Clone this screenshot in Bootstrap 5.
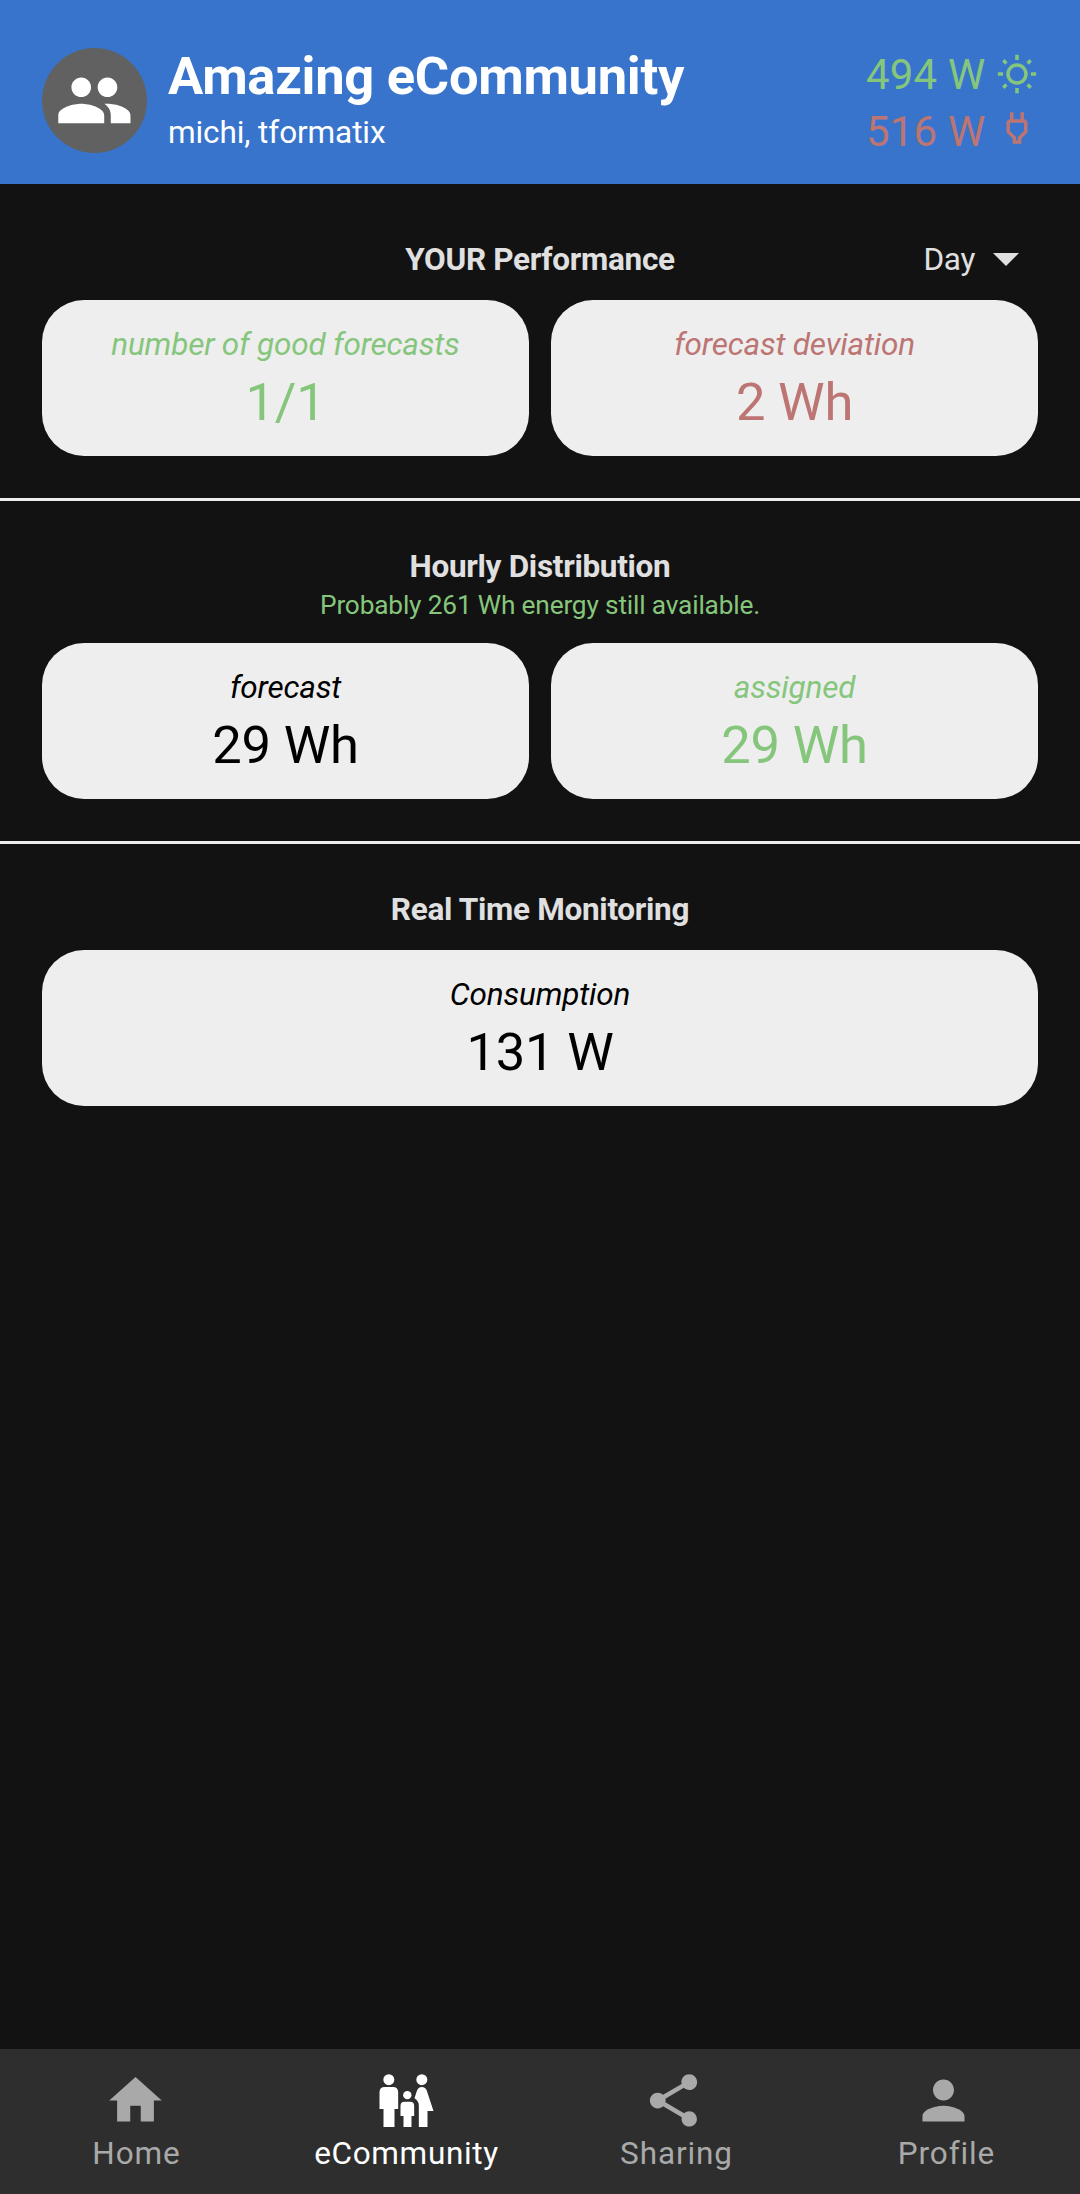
<!DOCTYPE html>
<html lang="en">
<head>
<meta charset="utf-8">
<meta name="viewport" content="width=device-width, initial-scale=1">
<title>Amazing eCommunity</title>
<link href="https://cdn.jsdelivr.net/npm/bootstrap@5.3.0/dist/css/bootstrap.min.css" rel="stylesheet">
<style>
  :root { --good: #86c67c; --bad: #bc7573; --page: #121212; --tile: #eeeeee; }
  body { background: var(--page); color: #e0e0e0; font-family: Roboto, sans-serif; font-size: 31.5px; line-height: 37px; min-height: 2194px; }
  svg { display: block; flex: none; }
  .good { color: var(--good); }
  .bad { color: var(--bad); }
  .app-header { background: #3874cc; height: 184px; padding: 45px 42px 0; }
  .avatar { width: 105px; height: 105px; background: #616161; margin: 3px 21px 0 0; }
  .app-title { font-size: 52.5px; line-height: 62px; letter-spacing: -.29px; font-weight: 700; margin: 0; }
  .members { letter-spacing: -.1px; margin-top: 7px; }
  .power { font-size: 42px; line-height: 49px; letter-spacing: .2px; gap: 10.5px; }
  .power-list { padding-top: 5px; gap: 8px; }
  .power .sun { margin-top: 3px; }
  .panel { padding: 0 42px 42px; }
  .panel + .panel { border-top: 3px solid var(--tile); }
  .panel-title { font-size: 31.5px; line-height: 37px; font-weight: 700; letter-spacing: -.3px; margin-bottom: 0; }
  .first-head { padding-top: 57px; padding-bottom: 22px; }
  .other-head { padding-top: 47px; padding-bottom: 22px; }
  .hint { font-size: 26.25px; line-height: 31px; letter-spacing: -.17px; margin-top: 5px; }
  .period { letter-spacing: -.3px; gap: 18px; padding-right: 19px; }
  .tiles { gap: 22px; }
  .tile { background: var(--tile); border-radius: 42px; height: 156px; padding-top: 26px; flex: 1 1 0; }
  .tile-label { font-style: italic; letter-spacing: -.2px; }
  .tile-value { font-size: 52.5px; line-height: 62px; margin-top: 8px; letter-spacing: -.2px; }
  .tab-bar { background: #2e2e2e; height: 145px; color: #a9a9a9; }
  .tab-bar a { color: inherit; text-decoration: none; letter-spacing: .9px; padding-top: 20px; flex: 1 1 0; }
  .tab-bar a.active { color: #fff; letter-spacing: .65px; }
  .tab-bar span { margin-top: 3px; padding-left: 3px; }
</style>
<script src="https://cdn.jsdelivr.net/npm/bootstrap@5.3.0/dist/js/bootstrap.bundle.min.js"></script>
</head>
<body class="d-flex flex-column">

<header class="app-header d-flex text-white">
  <div class="avatar rounded-circle d-flex align-items-center justify-content-center">
    <svg width="78.75" height="78.75" viewBox="0 0 24 24" fill="#fff"><path d="M16 11c1.66 0 2.99-1.34 2.99-3S17.66 5 16 5s-3 1.34-3 3 1.34 3 3 3zm-8 0c1.66 0 2.99-1.34 2.99-3S9.66 5 8 5 5 6.34 5 8s1.34 3 3 3zm0 2c-2.33 0-7 1.17-7 3.5V19h14v-2.5c0-2.33-4.67-3.5-7-3.5zm8 0c-.29 0-.62.02-.97.05 1.16.84 1.97 1.97 1.97 3.45V19h6v-2.5c0-2.33-4.67-3.5-7-3.5z"/></svg>
  </div>
  <div class="flex-grow-1">
    <h1 class="app-title">Amazing eCommunity</h1>
    <div class="members">michi, tformatix</div>
  </div>
  <div class="power-list d-flex flex-column align-items-end">
    <div class="power good d-flex">
      <span>494 W</span>
      <svg class="sun" width="42" height="42" viewBox="0 0 42 42" fill="none" stroke="currentColor" stroke-width="3.5"><circle cx="21" cy="21" r="9"/><path d="M21 1.8v5.3M21 34.9v5.3M1.8 21h5.3M34.9 21h5.3M7.300 7.300l3.100 3.100M31.600 31.600l3.100 3.100M7.300 34.700l3.100-3.100M31.600 10.400l3.100-3.100"/></svg>
    </div>
    <div class="power bad d-flex">
      <span>516 W</span>
      <svg width="42" height="42" viewBox="0 0 24 24" fill="currentColor"><path d="M16 7V3h-2v4h-4V3H8v4C7 7 6 8 6 9v5.5L9.500 18v3h5v-3l3.500-3.500V9c0-1-1-2-2-2m0 6.670l-3.500 3.500V19h-1v-1.830L8 13.650V9h8z"/></svg>
    </div>
  </div>
</header>

<main class="flex-grow-1">
  <section class="panel">
    <div class="first-head row gx-0">
      <h2 class="panel-title col-4 offset-4 text-center">YOUR Performance</h2>
      <div class="period col-4 d-flex align-items-center justify-content-end">
        <span>Day</span>
        <svg width="26" height="13" viewBox="0 0 10 5" fill="currentColor"><path d="M0 0l5 5 5-5z"/></svg>
      </div>
    </div>
    <div class="tiles d-flex text-center">
      <div class="tile good"><div class="tile-label">number of good forecasts</div><div class="tile-value">1/1</div></div>
      <div class="tile bad"><div class="tile-label">forecast deviation</div><div class="tile-value">2 Wh</div></div>
    </div>
  </section>

  <section class="panel">
    <div class="other-head text-center">
      <h2 class="panel-title">Hourly Distribution</h2>
      <div class="hint good">Probably 261 Wh energy still available.</div>
    </div>
    <div class="tiles d-flex text-center">
      <div class="tile text-black"><div class="tile-label">forecast</div><div class="tile-value">29 Wh</div></div>
      <div class="tile good"><div class="tile-label">assigned</div><div class="tile-value">29 Wh</div></div>
    </div>
  </section>

  <section class="panel">
    <div class="other-head text-center">
      <h2 class="panel-title">Real Time Monitoring</h2>
    </div>
    <div class="tiles d-flex text-center">
      <div class="tile text-black"><div class="tile-label">Consumption</div><div class="tile-value">131 W</div></div>
    </div>
  </section>
</main>

<nav class="tab-bar d-flex">
  <a href="#" class="d-flex flex-column align-items-center">
    <svg width="63" height="63" viewBox="0 0 24 24" fill="currentColor"><path d="M10 20v-6h4v6h5v-8h3L12 3 2 12h3v8z"/></svg>
    <span>Home</span>
  </a>
  <a href="#" class="active d-flex flex-column align-items-center">
    <svg width="63" height="63" viewBox="40.5 27 189 189" fill="currentColor"><circle cx="85" cy="59" r="16.5"/><circle cx="184" cy="59" r="16.5"/><circle cx="140.500" cy="105.500" r="12.500"/><path d="M73 81h24q16 0 16 16v50h-11v54H69v-54H57V97q0-16 16-16zM132 125h17q12 0 12 12v31h-8v33h-24v-33h-9v-31q0-12 12-12zM184 81q11 0 15 11l20 61h-18v48h-26v-64q0-14-13-22l7-22q4-12 15-12z"/></svg>
    <span>eCommunity</span>
  </a>
  <a href="#" class="d-flex flex-column align-items-center">
    <svg class="me-1" width="63" height="63" viewBox="0 0 24 24" fill="currentColor"><path d="M18 16.080c-.76 0-1.440.3-1.960.77L8.910 12.700c.05-.23.090-.46.090-.7s-.04-.47-.09-.7l7.050-4.110c.54.5 1.250.81 2.040.81 1.660 0 3-1.340 3-3s-1.340-3-3-3-3 1.340-3 3c0 .24.040.47.090.7L8.040 9.810C7.500 9.310 6.790 9 6 9c-1.660 0-3 1.340-3 3s1.340 3 3 3c.79 0 1.500-.31 2.040-.81l7.120 4.160c-.05.21-.08.43-.08.65 0 1.610 1.310 2.920 2.920 2.920s2.920-1.310 2.920-2.920-1.310-2.920-2.920-2.920z"/></svg>
    <span>Sharing</span>
  </a>
  <a href="#" class="d-flex flex-column align-items-center">
    <svg class="me-1" width="63" height="63" viewBox="0 0 24 24" fill="currentColor"><path d="M12 12c2.210 0 4-1.790 4-4s-1.790-4-4-4-4 1.790-4 4 1.790 4 4 4zm0 2c-2.670 0-8 1.340-8 4v2h16v-2c0-2.660-5.330-4-8-4z"/></svg>
    <span>Profile</span>
  </a>
</nav>

</body>
</html>
